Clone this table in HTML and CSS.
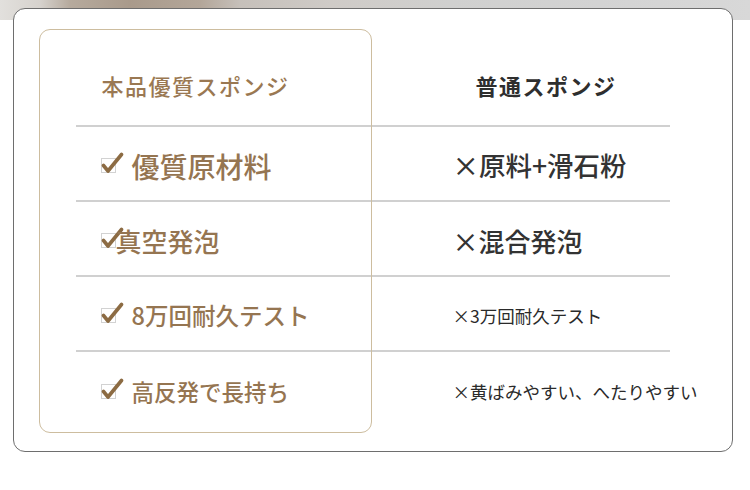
FILE: index.html
```html
<!DOCTYPE html>
<html lang="ja">
<head>
<meta charset="utf-8">
<link rel="stylesheet" href="styles.css">
</head>
<body>
<div class="band"></div>
<section class="card">
  <div class="highlight"></div>
  <div class="table">
    <div class="row head">
      <div class="cell left"><span class="label">本品優質スポンジ</span></div>
      <div class="cell right"><span class="label plain">普通スポンジ</span></div>
    </div>
    <div class="row">
      <div class="cell left">
        <svg class="check" viewBox="0 0 24 22" width="24" height="22"><rect x="1.5" y="6.5" width="14" height="14" fill="#fff" stroke="#d2d2d2"/><path d="M3.5 13.5 L8 19 L21.5 2.5" fill="none" stroke="#8c6b43" stroke-width="3.6" stroke-linecap="round" stroke-linejoin="round"/></svg>
        <span class="txt t28">優質原材料</span>
      </div>
      <div class="cell right"><span class="txt r26b">×原料+滑石粉</span></div>
    </div>
    <div class="row">
      <div class="cell left">
        <svg class="check tight" viewBox="0 0 24 22" width="24" height="22"><rect x="1.5" y="6.5" width="14" height="14" fill="#fff" stroke="#d2d2d2"/><path d="M3.5 13.5 L8 19 L21.5 2.5" fill="none" stroke="#8c6b43" stroke-width="3.6" stroke-linecap="round" stroke-linejoin="round"/></svg>
        <span class="txt t26">真空発泡</span>
      </div>
      <div class="cell right"><span class="txt r26">×混合発泡</span></div>
    </div>
    <div class="row">
      <div class="cell left">
        <svg class="check" viewBox="0 0 24 22" width="24" height="22"><rect x="1.5" y="6.5" width="14" height="14" fill="#fff" stroke="#d2d2d2"/><path d="M3.5 13.5 L8 19 L21.5 2.5" fill="none" stroke="#8c6b43" stroke-width="3.6" stroke-linecap="round" stroke-linejoin="round"/></svg>
        <span class="txt t23">8万回耐久テスト</span>
      </div>
      <div class="cell right"><span class="txt r17">×3万回耐久テスト</span></div>
    </div>
    <div class="row last">
      <div class="cell left">
        <svg class="check" viewBox="0 0 24 22" width="24" height="22"><rect x="1.5" y="6.5" width="14" height="14" fill="#fff" stroke="#d2d2d2"/><path d="M3.5 13.5 L8 19 L21.5 2.5" fill="none" stroke="#8c6b43" stroke-width="3.6" stroke-linecap="round" stroke-linejoin="round"/></svg>
        <span class="txt t22">高反発で長持ち</span>
      </div>
      <div class="cell right"><span class="txt r17">×黄ばみやすい、へたりやすい</span></div>
    </div>
  </div>
</section>
</body>
</html>
```

FILE: styles.css
```css
* { box-sizing: border-box; }
html, body { margin: 0; padding: 0; }
body {
  width: 750px;
  height: 490px;
  background: #fff;
  font-family: "Noto Sans CJK JP", "Noto Sans", sans-serif;
  overflow: hidden;
}
.band {
  height: 20px;
  background: linear-gradient(to right, #e2e0dd 0px, #d6d2cd 40px, #b6aa9d 70px, #a99a8b 130px, #b3a699 200px, #c6c0ba 240px, #cfcbc7 330px, #d0d0cf 450px, #d3d3d3 600px, #d8d8d8 750px);
}
.card {
  position: relative;
  margin: -12px 17px 0 13px;
  height: 444px;
  border: 1.5px solid #6e6e6e;
  border-radius: 12px;
  background: #fff;
  padding: 36px 0 0 61.5px;
}
.highlight {
  position: absolute;
  left: 24.5px;
  top: 19.5px;
  width: 333px;
  height: 404px;
  border: 1px solid #cdbd9f;
  border-radius: 11px;
  pointer-events: none;
}
.table { width: 594px; }
.row {
  display: grid;
  grid-template-columns: 295px 299px;
  height: 75px;
  border-bottom: 2px solid #d0d0d0;
}
.row.head { height: 82px; }
.row.last { border-bottom: none; }
.cell {
  display: flex;
  align-items: center;
  padding-top: 4px;
}
.head .cell { padding-top: 0; }
.cell.left { padding-left: 24px; }
.cell.right { padding-left: 82px; }
.head .cell.left { padding-left: 26px; }
.head .cell.right { padding-left: 105px; }
.label {
  font-size: 22px;
  font-weight: 500;
  letter-spacing: 1.5px;
  color: #9a7852;
  line-height: 1;
}
.label.plain {
  color: #2e2e2e;
  font-weight: 700;
}
.check { flex: none; margin-top: -6px; }
.txt { line-height: 1; white-space: nowrap; font-weight: 500; }
.cell.left .txt { color: #957551; margin-left: 8px; }
.check.tight { margin-right: -16px; }
.t28 { font-size: 28px; }
.t26 { font-size: 26px; }
.t23 { font-size: 23.5px; }
.t22 { font-size: 22.5px; }
.cell.right .txt { color: #333; }
.r26b { font-size: 26.5px; }
.r26 { font-size: 26px; }
.cell.right .r17 { font-size: 17.5px; font-weight: 400; color: #2a2a2a; }
```
